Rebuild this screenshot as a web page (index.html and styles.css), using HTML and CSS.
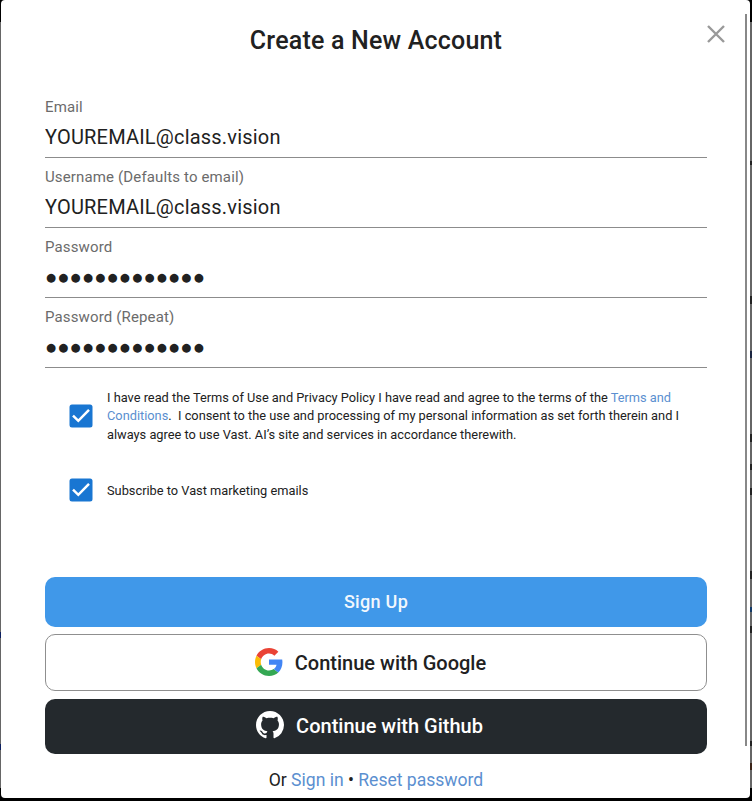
FILE: index.html
```html
<!DOCTYPE html>
<html lang="en">
<head>
<meta charset="utf-8">
<title>Create a New Account</title>
<link rel="stylesheet" href="styles.css">
</head>
<body>
<main class="dialog">
  <h1 class="title">Create a New Account</h1>
  <button class="close" aria-label="Close"><svg width="18" height="18" viewBox="0 0 18 18"><path d="M1 1L17 17M17 1L1 17" stroke="#999" stroke-width="2.4" fill="none"/></svg></button>
  <div class="scrollbar"></div>
  <form class="form">
    <label class="field"><span class="label">Email</span><input class="input" type="text" value="YOUREMAIL@class.vision"></label>
    <label class="field"><span class="label">Username (Defaults to email)</span><input class="input" type="text" value="YOUREMAIL@class.vision"></label>
    <label class="field"><span class="label">Password</span><input class="input masked" type="text" value="●●●●●●●●●●●●●"></label>
    <label class="field"><span class="label">Password (Repeat)</span><input class="input masked" type="text" value="●●●●●●●●●●●●●"></label>
    <div class="check terms">
      <svg class="box" width="24" height="24" viewBox="0 0 24 24"><rect x=".5" y=".5" width="23" height="23" rx="2.5" fill="#1976d2"/><path d="M4 11.6L9.3 16.8L20 5.8" fill="none" stroke="#fff" stroke-width="2.5"/></svg>
      <p class="text">I have read the Terms of Use and Privacy Policy I have read and agree to the terms of the <a class="link">Terms and<br>Conditions</a>.&nbsp; I consent to the use and processing of my personal information as set forth therein and I<br>always agree to use Vast. AI’s site and services in accordance therewith.</p>
    </div>
    <div class="check subscribe">
      <svg class="box" width="24" height="24" viewBox="0 0 24 24"><rect x=".5" y=".5" width="23" height="23" rx="2.5" fill="#1976d2"/><path d="M4 11.6L9.3 16.8L20 5.8" fill="none" stroke="#fff" stroke-width="2.5"/></svg>
      <p class="text">Subscribe to Vast marketing emails</p>
    </div>
    <button type="button" class="btn signup">Sign Up</button>
    <button type="button" class="btn google">
      <svg width="28" height="28" viewBox="2 2 44 44"><path fill="#EA4335" d="M24 10.75c3.23 0 6.13 1.11 8.41 3.29l6.31-6.31C34.91 4.18 29.93 2 24 2 15.4 2 7.96 6.93 4.34 14.12l7.35 5.7c1.73-5.2 6.58-9.07 12.31-9.07z"/><path fill="#FBBC05" d="M11.69 28.18c-.44-1.32-.69-2.73-.69-4.18s.25-2.86.69-4.18l-7.35-5.7C2.85 17.09 2 20.45 2 24s.85 6.91 2.34 9.88l7.35-5.7z"/><path fill="#34A853" d="M24 46c5.94 0 10.92-1.97 14.56-5.33l-7.11-5.52c-1.97 1.32-4.49 2.1-7.45 2.1-5.73 0-10.58-3.87-12.31-9.07l-7.35 5.7C7.96 41.07 15.4 46 24 46z"/><path fill="#4285F4" d="M45.12 24.5c0-1.56-.14-3.06-.4-4.5H24v8.51h11.84c-.51 2.75-2.06 5.08-4.39 6.64l7.11 5.52c4.16-3.83 6.56-9.47 6.56-16.17z"/></svg>
      <span>Continue with Google</span>
    </button>
    <button type="button" class="btn github">
      <svg width="28" height="28" viewBox="0 0 16 16"><path fill="#fff" d="M8 0C3.58 0 0 3.58 0 8c0 3.54 2.29 6.53 5.47 7.59.4.07.55-.17.55-.38 0-.19-.01-.82-.01-1.49-2.01.37-2.53-.49-2.69-.94-.09-.23-.48-.94-.82-1.13-.28-.15-.68-.52-.01-.53.63-.01 1.08.58 1.23.82.72 1.21 1.87.87 2.33.66.07-.52.28-.87.51-1.07-1.78-.2-3.64-.89-3.64-3.95 0-.87.31-1.59.82-2.15-.08-.2-.36-1.02.08-2.12 0 0 .67-.21 2.2.82.64-.18 1.32-.27 2-.27s1.36.09 2 .27c1.53-1.04 2.2-.82 2.2-.82.44 1.1.16 1.92.08 2.12.51.56.82 1.27.82 2.15 0 3.07-1.87 3.75-3.65 3.95.29.25.54.73.54 1.48 0 1.07-.01 1.93-.01 2.2 0 .21.15.46.55.38A8.01 8.01 0 0 0 16 8c0-4.42-3.58-8-8-8z"/></svg>
      <span>Continue with Github</span>
    </button>
    <p class="footer">Or <a class="link">Sign in</a> • <a class="link">Reset password</a></p>
  </form>
</main>
</body>
</html>
```

FILE: styles.css
```css
* { box-sizing: border-box; }
html { height: 100%; overflow: hidden; }
body {
  margin: 0;
  height: 801px;
  padding: 0 2px 3px 1px;
  overflow: hidden;
  font-family: Roboto, sans-serif;
  color: #212121;
  background:
    linear-gradient(transparent 632px, #0d2060 632px 638px, transparent 638px 744px, #0d2060 744px 750px, transparent 750px) left / 1px 100% no-repeat,
    linear-gradient(transparent 161px, #222 161px 165px, transparent 165px 296px, #222 296px 304px, transparent 304px 351px, #1a2540 351px 358px, transparent 358px 434px, #222 434px 442px, transparent 442px 464px, #222 464px 470px, transparent 470px 488px, #222 488px 495px, transparent 495px 571px, #222 571px 579px, transparent 579px 607px, #123a68 607px 612px, transparent 612px 626px, #222 626px 633px, transparent 633px 741px, #222 741px 746px, transparent 746px 763px, #3a2418 763px 770px, transparent 770px) right / 2px 100% no-repeat,
    linear-gradient(#000 0 22px, #666 22px 788px, #000 788px);
}
.dialog {
  position: relative;
  height: 798px;
  padding: 25px 43px 0 44px;
  background: #fff;
  border-radius: 4px;
}
.title {
  margin: 0;
  height: 31px;
  line-height: 31px;
  text-align: center;
  font-size: 25px;
  font-weight: 500;
  letter-spacing: .2px;
}
.close {
  position: absolute;
  top: 25px;
  right: 25px;
  width: 18px;
  height: 18px;
  padding: 0;
  border: 0;
  background: none;
}
.close svg { display: block; }
.scrollbar {
  position: absolute;
  top: 14px;
  right: 3px;
  width: 2px;
  height: 732px;
  background: #888;
}
.form { padding-top: 32px; }
.field {
  display: flex;
  flex-direction: column;
  height: 70px;
  padding-top: 9px;
  border-bottom: 1px solid #8c8c8c;
}
.label {
  height: 20px;
  line-height: 20px;
  font-size: 15px;
  letter-spacing: .14px;
  color: #6b6b6b;
}
.input {
  width: 100%;
  height: 40px;
  padding: 0;
  border: 0;
  outline: 0;
  font: 400 20px Roboto, sans-serif;
  letter-spacing: .2px;
  color: #212121;
  background: none;
}
.masked {
  padding-left: 1px;
  font: 11.5px "DejaVu Sans", sans-serif;
  letter-spacing: 2.27px;
}
.check {
  display: flex;
  align-items: center;
  gap: 14px;
  padding-left: 24px;
}
.box { flex: none; }
.terms { margin-top: 20px; height: 56px; }
.subscribe { margin-top: 34px; height: 24px; }
.text {
  margin: 0;
  padding-top: 1px;
  font-size: 12.8px;
  line-height: 18.5px;
  white-space: nowrap;
}
.subscribe .text { padding-top: 2px; }
.link { color: #5b8fd0; }
.btn {
  display: flex;
  align-items: center;
  justify-content: center;
  gap: 12px;
  width: 100%;
  padding: 0;
  border: 0;
  border-radius: 10px;
  font: 500 20px Roboto, sans-serif;
  color: #212121;
}
.signup {
  height: 50px;
  margin-top: 75px;
  padding-bottom: 2px;
  font-size: 18px;
  letter-spacing: .3px;
  color: #f2f7fd;
  background: #4098e9;
}
.google {
  height: 57px;
  margin-top: 7px;
  padding: 0 11px 1px 0;
  border: 1px solid #8f8f8f;
  background: #fff;
}
.google span { padding-top: 2px; }
.github {
  height: 55px;
  margin-top: 8px;
  padding: 0 13px 3px 0;
  color: #fff;
  background: #24292d;
}
.github span { padding-top: 1px; }
.footer {
  margin: 13px 0 0;
  line-height: 26px;
  text-align: center;
  font-size: 17.6px;
  letter-spacing: -.02px;
}
```
